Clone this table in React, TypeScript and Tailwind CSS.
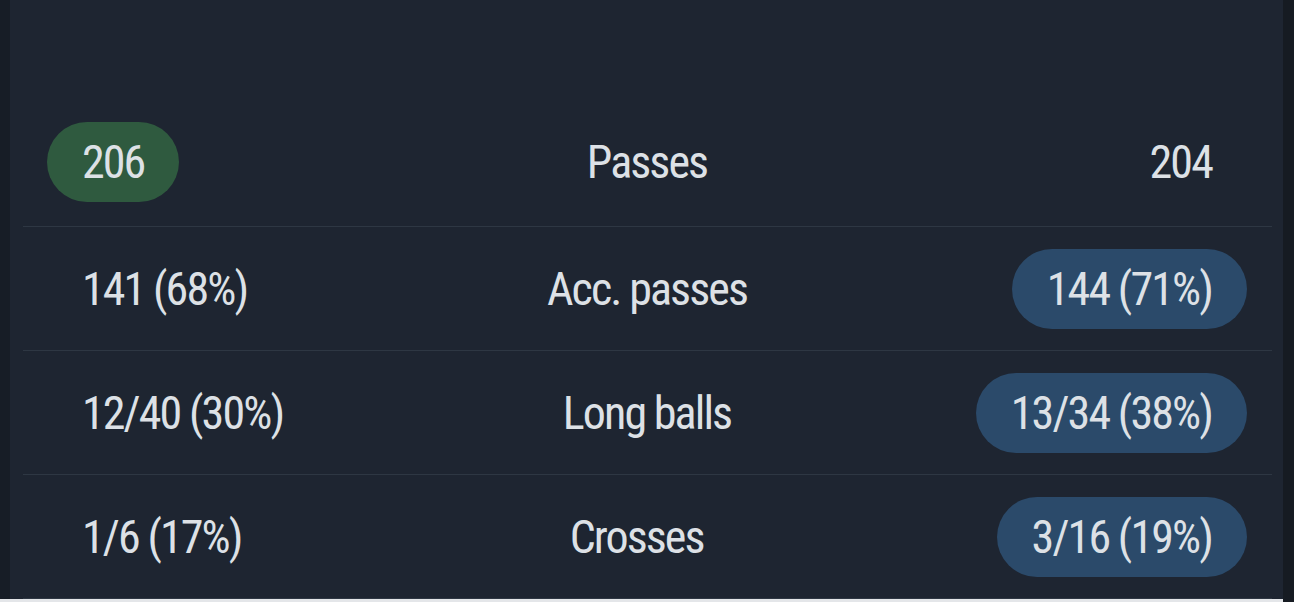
import React from 'react';

type Side = { value: string; pill?: 'green' | 'blue' };

interface StatRow {
  label: string;
  home: Side;
  away: Side;
}

const rows: StatRow[] = [
  { label: 'Passes', home: { value: '206', pill: 'green' }, away: { value: '204' } },
  { label: 'Acc. passes', home: { value: '141 (68%)' }, away: { value: '144 (71%)', pill: 'blue' } },
  { label: 'Long balls', home: { value: '12/40 (30%)' }, away: { value: '13/34 (38%)', pill: 'blue' } },
  { label: 'Crosses', home: { value: '1/6 (17%)' }, away: { value: '3/16 (19%)', pill: 'blue' } },
];

const font = { fontFamily: '"Roboto Condensed", "Roboto", sans-serif' };

const Value: React.FC<{ side: Side }> = ({ side }) => {
  const bg =
    side.pill === 'green' ? 'bg-[#2f5a3f]' : side.pill === 'blue' ? 'bg-[#2b4a6a]' : 'bg-transparent';
  return (
    <div className={`flex h-[80px] shrink-0 items-center rounded-full px-[35px] ${bg}`}>
      <span className="whitespace-nowrap text-[46px] leading-none font-stretch-[75%] tracking-[-1.9px] text-[#dde1e6]">
        {side.value}
      </span>
    </div>
  );
};

const Row: React.FC<{ row: StatRow; first?: boolean }> = ({ row, first }) => (
  <div
    className={`flex items-center border-b border-[#2e3743] pl-[24px] pr-[25px] ${first ? 'h-[130px]' : 'h-[124px]'}`}
  >
    <Value side={row.home} />
    <div className="flex-1 text-center text-[46px] leading-none font-stretch-[75%] tracking-[-1.9px] text-[#dde1e6]">
      {row.label}
    </div>
    <Value side={row.away} />
  </div>
);

export default function App() {
  return (
    <div className="flex h-[602px] w-full bg-[#161b22]" style={font}>
      <div className="flex flex-1 flex-col">
        <div className="flex flex-1">
          <div className="w-[10px] bg-[#171d26]" />
          <div className="flex flex-1 flex-col bg-[#1e2531] pl-[13px] pr-[11px]">
            <div className="h-[97px]" />
            {rows.map((r, i) => (
              <Row key={r.label} row={r} first={i === 0} />
            ))}
          </div>
        </div>
        <div className="h-[3px] bg-[#e4e6e9]" />
      </div>
      <div className="w-[11px] bg-[#161b22]" />
    </div>
  );
}
